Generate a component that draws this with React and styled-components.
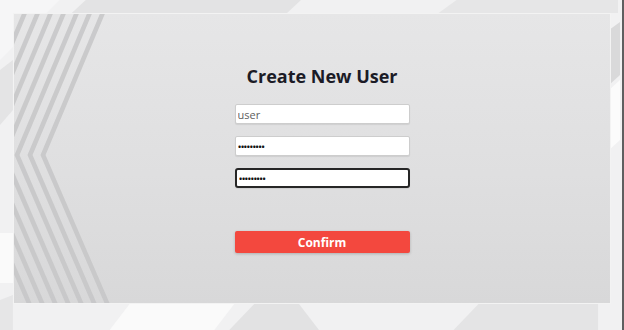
import React from 'react';
import styled, { createGlobalStyle } from 'styled-components';

const GlobalStyle = createGlobalStyle`
  html, body {
    margin: 0;
    padding: 0;
    background: #f1f1f2;
  }
  body {
    font-family: 'Open Sans', 'Noto Sans', sans-serif;
  }
`;

const Page = styled.div`
  position: relative;
  width: 624px;
  height: 330px;
  box-sizing: border-box;
  padding: 13px 11px 26px 13px;
  display: flex;
  overflow: hidden;
  background: #f1f1f2;
  border-right: 2px solid #5f5f60;
`;

const Backdrop = styled.svg`
  position: absolute;
  inset: 0;
  width: 100%;
  height: 100%;
`;

const Panel = styled.div`
  position: relative;
  flex: 1;
  display: flex;
  flex-direction: column;
  align-items: center;
  padding: 50px 0 0 20px;
  overflow: hidden;
  border: 1px solid #f3f3f3;
  background: linear-gradient(180deg, #e6e6e7 0%, #dfdfe0 55%, #d8d8d9 100%);
`;

const Stripes = styled.svg`
  position: absolute;
  left: 0;
  top: 0;
  width: 130px;
  height: 100%;
`;

const Form = styled.form`
  position: relative;
  width: 175px;
  display: flex;
  flex-direction: column;
  gap: 12px;
`;

const Title = styled.h1`
  margin: 0 0 4px;
  text-align: center;
  font-size: 18px;
  line-height: 24px;
  font-weight: 700;
  color: #1b1b26;
  white-space: nowrap;
`;

const Field = styled.input`
  box-sizing: border-box;
  width: 175px;
  height: 20px;
  margin: 0;
  padding: 0 2px;
  font-family: 'Open Sans', sans-serif;
  font-size: ${p => (p.type === 'password' ? '11px' : '11px')};
  letter-spacing: ${p => (p.type === 'password' ? '-1.2px' : '0')};
  color: ${p => (p.type === 'password' ? '#111' : '#606060')};
  background: #fff;
  border: ${p => (p.$focused ? '2px solid #262626' : '1px solid #cdcdcd')};
  border-radius: ${p => (p.$focused ? '3px' : '2px')};
  box-shadow: 0 1px 1px rgba(0, 0, 0, 0.08);
  outline: none;
`;

const Confirm = styled.button`
  margin-top: 31px;
  width: 175px;
  height: 22px;
  padding: 0;
  border: none;
  border-radius: 2px;
  background: #f3483e;
  color: #fff;
  font-family: 'Open Sans', sans-serif;
  font-size: 12px;
  font-weight: 700;
  box-shadow: 0 1px 3px rgba(0, 0, 0, 0.2);
  cursor: pointer;
`;

const chevrons = [0, 1, 2, 3, 4, 5, 6];

export default function App() {
  return (
    <Page>
      <GlobalStyle />
      <Backdrop viewBox="0 0 624 330" preserveAspectRatio="none">
        <polygon points="72,13 86,0 302,0 288,13" fill="#e3e3e4" />
        <polygon points="440,13 458,0 620,0 620,13" fill="#e6e6e7" />
        <polygon points="0,0 60,0 0,60" fill="#f6f6f7" />
        <polygon points="0,70 13,60 13,110 0,125" fill="#e4e4e5" />
        <polygon points="0,233 13,233 13,283 0,283" fill="#fafafa" />
        <polygon points="611,30 622,22 622,75 611,85" fill="#d9d9da" />
        <polygon points="611,90 622,80 622,140 611,150" fill="#fbfbfb" />
        <polygon points="230,330 255,304 300,304 320,330" fill="#e2e2e3" />
        <polygon points="110,330 130,304 235,304 215,330" fill="#fafafa" />
        <polygon points="455,330 480,304 600,304 600,330" fill="#e4e4e5" />
        <polygon points="0,300 13,295 13,330 0,330" fill="#e6e6e7" />
      </Backdrop>
      <Panel>
        <Stripes viewBox="0 0 130 291" preserveAspectRatio="xMinYMin slice">
          {chevrons.map(k => (
            <polyline
              key={k}
              points={`${90 - 13 * k},-4 ${29 - 13 * k},141 ${96 - 13 * k},296`}
              fill="none"
              stroke="#c6c6c7"
              strokeWidth="4.6"
              opacity="0.85"
            />
          ))}
        </Stripes>
        <Form onSubmit={e => e.preventDefault()}>
          <Title>Create New User</Title>
          <Field type="text" defaultValue="user" readOnly />
          <Field type="password" defaultValue="123456789" readOnly />
          <Field type="password" defaultValue="123456789" readOnly $focused />
          <Confirm type="button">Confirm</Confirm>
        </Form>
      </Panel>
    </Page>
  );
}
